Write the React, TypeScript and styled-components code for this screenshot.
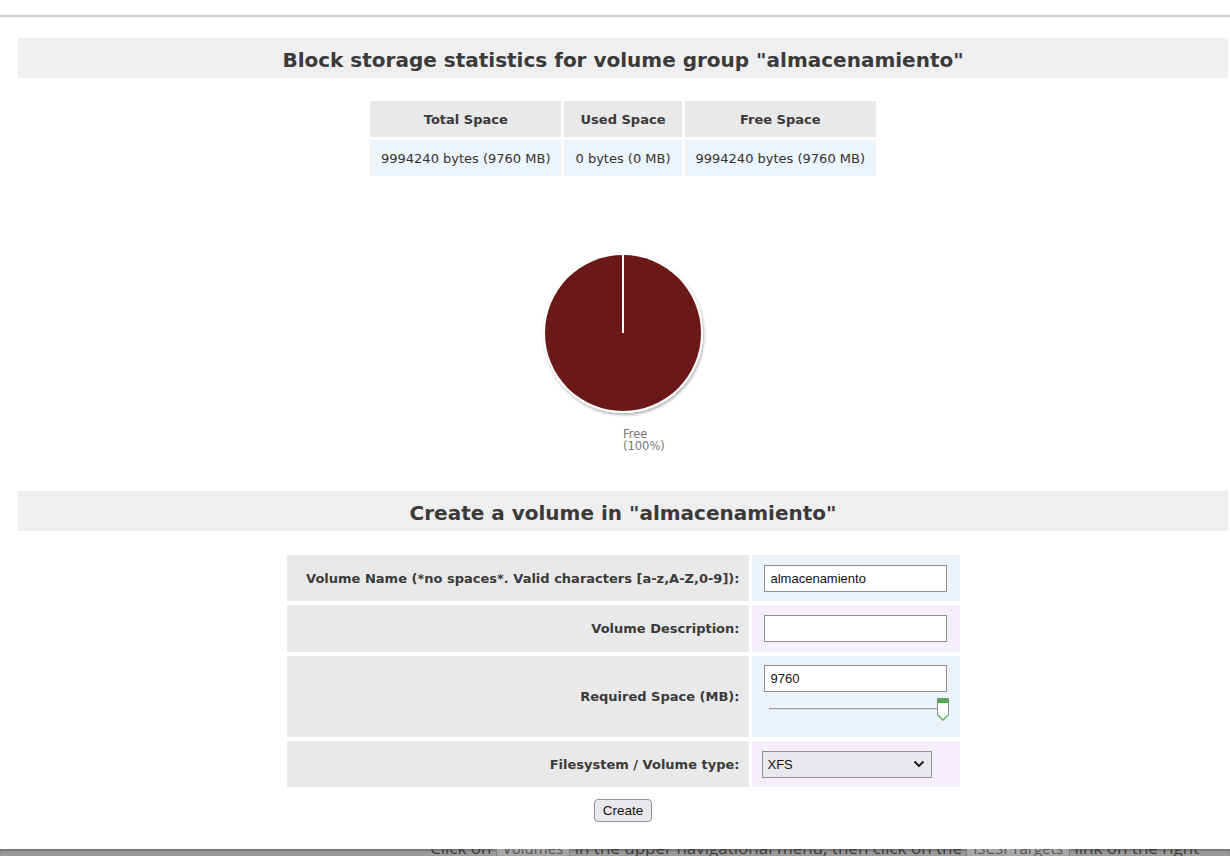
import React from "react";
import styled, { createGlobalStyle } from "styled-components";

const GlobalStyle = createGlobalStyle`
  html, body { margin: 0; padding: 0; background: #fff; }
  body { overflow: hidden; font-family: "DejaVu Sans", Verdana, sans-serif; }
  * { box-sizing: border-box; }
`;

const Page = styled.div`
  height: 856px;
  display: flex;
  flex-direction: column;
  background: #fff;
`;

const TopRule = styled.div`
  margin-top: 15px;
  border-top: 2px solid #cbcbcb;
`;

const Content = styled.div`
  padding: 21px 2px 0 18px;
  display: flex;
  flex-direction: column;
`;

const SectionTitle = styled.h2`
  margin: 0;
  height: 40px;
  padding-top: 3px;
  display: flex;
  align-items: center;
  justify-content: center;
  background: #efefef;
  font-family: "DejaVu Sans", Verdana, sans-serif;
  font-weight: bold;
  font-size: 20px;
  color: #3a3a3a;
`;

const StatsTable = styled.table`
  margin: 20px auto 0;
  border-collapse: separate;
  border-spacing: 3px;
  font-family: "DejaVu Sans", Verdana, sans-serif;
  font-size: 13px;
  color: #333;
`;

const StatHead = styled.th`
  height: 36px;
  padding: 0 11px;
  background: #e9e9e9;
  font-weight: bold;
  text-align: center;
  color: #3a3a3a;
`;

const StatCell = styled.td`
  height: 36px;
  padding: 0 11px;
  background: #ecf4fc;
  text-align: center;
  white-space: nowrap;
`;

const ChartWrap = styled.div`
  height: 312px;
  padding-top: 69px;
  display: flex;
  flex-direction: column;
  align-items: center;
`;

const Legend = styled.div`
  width: 170px;
  margin-top: 10px;
  padding-left: 85px;
  font-family: "DejaVu Sans", Verdana, sans-serif;
  font-size: 11.5px;
  line-height: 12px;
  color: #777;
`;

const FormTable = styled.table`
  margin: 20px auto 0;
  border-collapse: separate;
  border-spacing: 3px 4px;
`;

const LabelCell = styled.td`
  width: 462px;
  padding: 0 9px 0 10px;
  background: #e9e9e9;
  text-align: right;
  font-family: "DejaVu Sans", Verdana, sans-serif;
  font-weight: bold;
  font-size: 13px;
  color: #3a3a3a;
  white-space: nowrap;
`;

const FieldCell = styled.td<{ $tone: "blue" | "lilac"; $h: number }>`
  width: 208px;
  height: ${(p) => p.$h}px;
  padding: 0 12px 0 12px;
  background: ${(p) => (p.$tone === "blue" ? "#ebf4fc" : "#f5eefc")};
  vertical-align: middle;
`;

const TextInput = styled.input`
  display: block;
  width: 183px;
  height: 27px;
  padding: 0 6px;
  border: 1px solid #8f8f8f;
  background: #fff;
  font-family: "Liberation Sans", Arial, sans-serif;
  font-size: 13px;
  color: #111;
  outline: none;
`;

const SliderCell = styled.div`
  display: flex;
  flex-direction: column;
`;

const SliderRow = styled.div`
  position: relative;
  height: 32px;
  margin-top: 5px;
`;

const Track = styled.div`
  position: absolute;
  left: 5px;
  right: 8px;
  top: 11px;
  height: 2px;
  border-top: 1px solid #9a9a9a;
  border-bottom: 1px solid #e0e0e0;
  border-left: 1px solid #b0b0b0;
`;

const Handle = styled.svg`
  position: absolute;
  right: -2px;
  top: 0;
`;

const SelectWrap = styled.div`
  position: relative;
  width: 170px;
  margin-left: -2px;
`;

const Select = styled.select`
  appearance: none;
  -webkit-appearance: none;
  display: block;
  width: 170px;
  height: 27px;
  padding: 0 24px 0 5px;
  border: 1px solid #8f8f9d;
  border-radius: 0;
  background: #e9e9ed;
  font-family: "Liberation Sans", Arial, sans-serif;
  font-size: 13px;
  color: #111;
`;

const Chevron = styled.svg`
  position: absolute;
  right: 7px;
  top: 9px;
  pointer-events: none;
`;

const ButtonRow = styled.div`
  display: flex;
  justify-content: center;
  margin-top: 8px;
`;

const Button = styled.button`
  height: 23px;
  padding: 0 8px;
  border: 1px solid #8f8f9d;
  border-radius: 4px;
  background: #e9e9ed;
  font-family: "Liberation Sans", Arial, sans-serif;
  font-size: 13.5px;
  color: #111;
`;

const Footer = styled.div`
  margin-top: auto;
  height: 7px;
  overflow: hidden;
  background: #9b9b9b;
  box-shadow: inset 0 2px 2px rgba(0, 0, 0, 0.25);
`;

const FooterText = styled.p`
  margin: -14px 0 0 430px;
  white-space: nowrap;
  font-family: "Open Sans", sans-serif;
  font-size: 17px;
  line-height: 24px;
  color: #3a3a3a;
`;

const Code = styled.span`
  display: inline-block;
  padding: 0 6px;
  border: 1px solid #7d7d7d;
  border-radius: 3px;
  background: #a6a6a6;
  font-family: "Open Sans", sans-serif;
  font-size: 15px;
  color: #555;
`;

function Pie() {
  return (
    <svg width="170" height="170" viewBox="0 0 170 170">
      <defs>
        <filter id="sh" x="-10%" y="-10%" width="120%" height="120%">
          <feDropShadow dx="1" dy="2" stdDeviation="1.5" floodColor="#000" floodOpacity="0.3" />
        </filter>
      </defs>
      <circle cx="85" cy="85" r="80" fill="#fff" filter="url(#sh)" />
      <circle cx="85" cy="85" r="78" fill="#6a1818" />
      <line x1="85" y1="6" x2="85" y2="85" stroke="#fff" strokeWidth="2" />
    </svg>
  );
}

export default function App() {
  return (
    <Page>
      <GlobalStyle />
      <TopRule />
      <Content>
        <SectionTitle>Block storage statistics for volume group "almacenamiento"</SectionTitle>
        <StatsTable>
          <thead>
            <tr>
              <StatHead>Total Space</StatHead>
              <StatHead>Used Space</StatHead>
              <StatHead>Free Space</StatHead>
            </tr>
          </thead>
          <tbody>
            <tr>
              <StatCell>9994240 bytes (9760 MB)</StatCell>
              <StatCell>0 bytes (0 MB)</StatCell>
              <StatCell>9994240 bytes (9760 MB)</StatCell>
            </tr>
          </tbody>
        </StatsTable>
        <ChartWrap>
          <Pie />
          <Legend>
            Free
            <br />
            (100%)
          </Legend>
        </ChartWrap>
        <SectionTitle>Create a volume in "almacenamiento"</SectionTitle>
        <FormTable>
          <tbody>
            <tr>
              <LabelCell>Volume Name (*no spaces*. Valid characters [a-z,A-Z,0-9]):</LabelCell>
              <FieldCell $tone="blue" $h={46}>
                <TextInput defaultValue="almacenamiento" />
              </FieldCell>
            </tr>
            <tr>
              <LabelCell>Volume Description:</LabelCell>
              <FieldCell $tone="lilac" $h={47}>
                <TextInput defaultValue="" />
              </FieldCell>
            </tr>
            <tr>
              <LabelCell>Required Space (MB):</LabelCell>
              <FieldCell $tone="blue" $h={81}>
                <SliderCell>
                  <TextInput defaultValue="9760" />
                  <SliderRow>
                    <Track />
                    <Handle width="14" height="25" viewBox="0 0 14 25">
                      <path d="M1.5 1.5 H12.5 V18 L7 23.5 L1.5 18 Z" fill="#fff" stroke="#8a8a8a" strokeWidth="1" />
                      <rect x="2" y="2" width="10" height="4" fill="#4cae4c" />
                      <path d="M2 18 L7 23 L12 18" fill="none" stroke="#5cb85c" strokeWidth="1.2" />
                    </Handle>
                  </SliderRow>
                </SliderCell>
              </FieldCell>
            </tr>
            <tr>
              <LabelCell>Filesystem / Volume type:</LabelCell>
              <FieldCell $tone="lilac" $h={46}>
                <SelectWrap>
                  <Select defaultValue="xfs">
                    <option value="xfs">XFS</option>
                    <option value="ext4">EXT4</option>
                    <option value="iscsi">iSCSI</option>
                  </Select>
                  <Chevron width="12" height="8" viewBox="0 0 12 8">
                    <path d="M1.5 1.5 L6 6 L10.5 1.5" fill="none" stroke="#111" strokeWidth="1.8" />
                  </Chevron>
                </SelectWrap>
              </FieldCell>
            </tr>
          </tbody>
        </FormTable>
        <ButtonRow>
          <Button>Create</Button>
        </ButtonRow>
      </Content>
      <Footer>
        <FooterText>
          Click on <Code>Volumes</Code> in the upper navigational menu, then click on the <Code>iSCSI Targets</Code> link on the right
        </FooterText>
      </Footer>
    </Page>
  );
}
